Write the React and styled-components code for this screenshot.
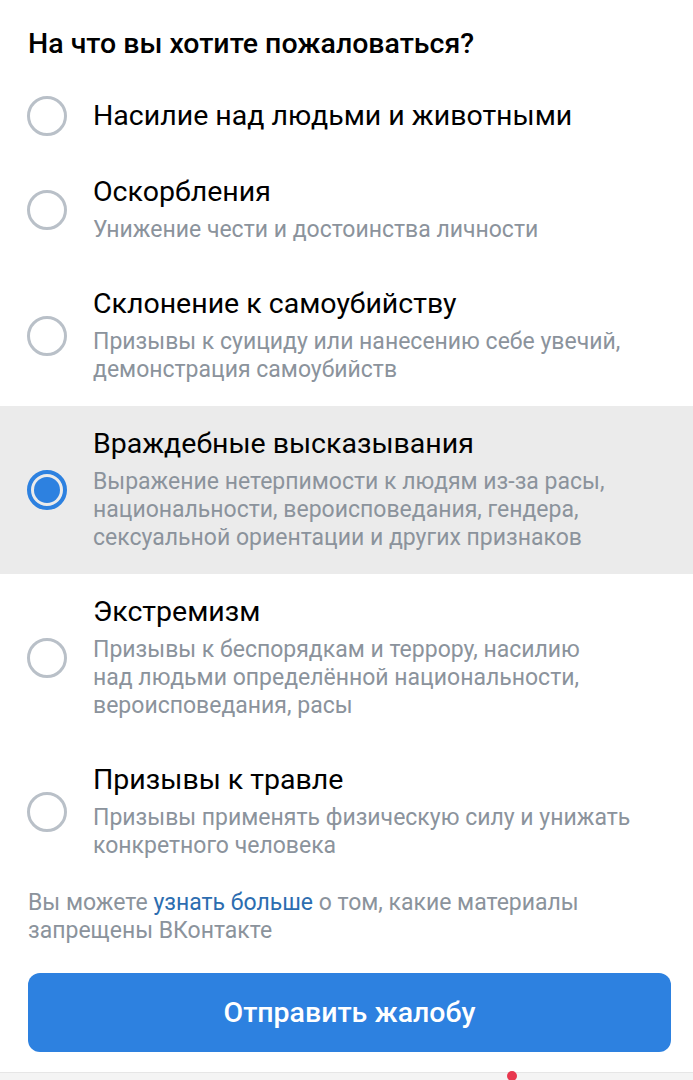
import React from "react";
import styled, { createGlobalStyle } from "styled-components";

const Global = createGlobalStyle`
  html, body { margin: 0; padding: 0; background: #fff; }
  body { font-family: Roboto, "Noto Sans", Arial, sans-serif; -webkit-font-smoothing: antialiased; }
`;

const Page = styled.div`
  width: 693px;
  height: 1080px;
  overflow: hidden;
  display: flex;
  flex-direction: column;
  background: #fff;
`;

const Heading = styled.h1`
  margin: 0;
  padding: 26px 28px 16px;
  font-size: 28.5px;
  line-height: 36px;
  font-weight: 500;
  color: #000;
`;

const List = styled.div`
  display: flex;
  flex-direction: column;
`;

const Row = styled.label`
  display: flex;
  align-items: center;
  gap: 26px;
  padding: 22px 28px 22px 27px;
  background: ${(p) => (p.$active ? "#ebebeb" : "transparent")};
`;

const Radio = styled.span`
  flex: none;
  width: 40px;
  height: 40px;
  margin: -4px 0;
  box-sizing: border-box;
  border-radius: 50%;
  border: ${(p) => (p.$checked ? "4px solid #2d81e0" : "3px solid #b9c0c8")};
  display: flex;
  align-items: center;
  justify-content: center;
  &::after {
    content: "";
    display: ${(p) => (p.$checked ? "block" : "none")};
    width: 26px;
    height: 26px;
    border-radius: 50%;
    background: #2d81e0;
  }
`;

const Texts = styled.div`
  display: flex;
  flex-direction: column;
  gap: 8px;
  white-space: nowrap;
`;

const Title = styled.div`
  font-size: 28.5px;
  line-height: 32px;
  color: #000;
`;

const Desc = styled.div`
  font-size: 23px;
  line-height: 28px;
  color: #8b939c;
`;

const Note = styled.p`
  margin: 7px 28px 0;
  font-size: 23px;
  line-height: 28px;
  color: #8b939c;
  white-space: nowrap;
`;

const Link = styled.a`
  color: #2c6db0;
  text-decoration: none;
`;

const Button = styled.button`
  margin: 28px 22px 0 28px;
  height: 79px;
  flex: none;
  border: none;
  border-radius: 12px;
  background: #2d81e0;
  color: #fff;
  font-family: inherit;
  font-size: 28.5px;
  font-weight: 500;
`;

const BottomBar = styled.div`
  margin-top: 20px;
  flex: 1;
  background: #f4f4f4;
  border-top: 1px solid #e6e6e6;
  position: relative;
`;

const Dot = styled.span`
  position: absolute;
  left: 507px;
  top: -2px;
  width: 10px;
  height: 10px;
  border-radius: 50%;
  background: #e8384f;
`;

const items = [
  { title: "Насилие над людьми и животными", desc: [] },
  { title: "Оскорбления", desc: ["Унижение чести и достоинства личности"] },
  {
    title: "Склонение к самоубийству",
    desc: ["Призывы к суициду или нанесению себе увечий,", "демонстрация самоубийств"],
  },
  {
    title: "Враждебные высказывания",
    desc: [
      "Выражение нетерпимости к людям из-за расы,",
      "национальности, вероисповедания, гендера,",
      "сексуальной ориентации и других признаков",
    ],
    active: true,
  },
  {
    title: "Экстремизм",
    desc: [
      "Призывы к беспорядкам и террору, насилию",
      "над людьми определённой национальности,",
      "вероисповедания, расы",
    ],
  },
  {
    title: "Призывы к травле",
    desc: ["Призывы применять физическую силу и унижать", "конкретного человека"],
  },
];

export default function App() {
  return (
    <Page>
      <Global />
      <Heading>На что вы хотите пожаловаться?</Heading>
      <List>
        {items.map((it) => (
          <Row key={it.title} $active={it.active}>
            <Radio $checked={it.active} />
            <Texts>
              <Title>{it.title}</Title>
              {it.desc.length > 0 && (
                <Desc>
                  {it.desc.map((line, i) => (
                    <React.Fragment key={i}>
                      {i > 0 && <br />}
                      {line}
                    </React.Fragment>
                  ))}
                </Desc>
              )}
            </Texts>
          </Row>
        ))}
      </List>
      <Note>
        Вы можете <Link>узнать больше</Link> о том, какие материалы
        <br />
        запрещены ВКонтакте
      </Note>
      <Button>Отправить жалобу</Button>
      <BottomBar>
        <Dot />
      </BottomBar>
    </Page>
  );
}
